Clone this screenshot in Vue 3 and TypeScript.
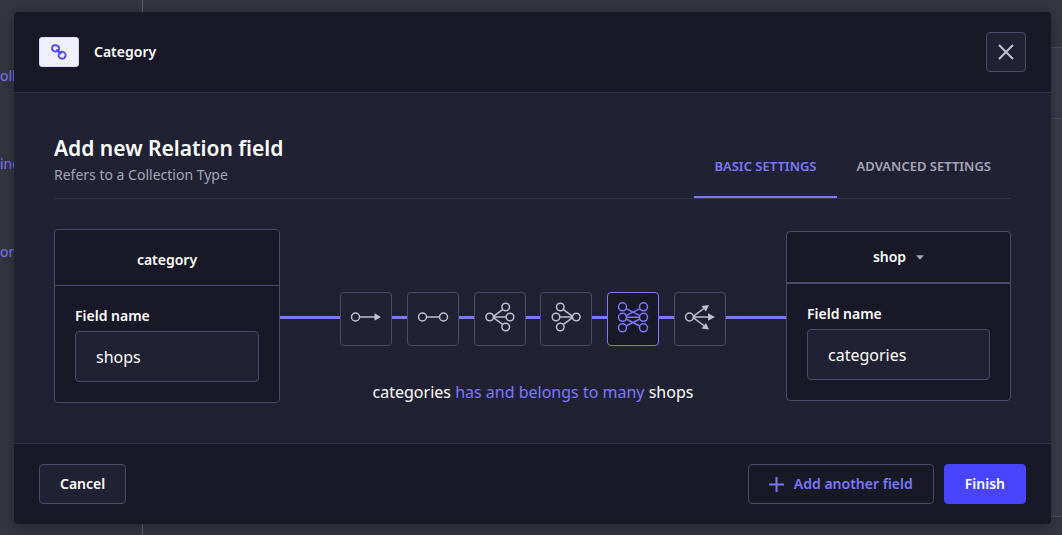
<script setup lang="ts">
import { ref } from 'vue'

interface Relation {
  id: string
  label: string
}

const relations: Relation[] = [
  { id: 'oneWay', label: 'has one' },
  { id: 'oneToOne', label: 'has and belongs to one' },
  { id: 'oneToMany', label: 'belongs to many' },
  { id: 'manyToOne', label: 'has many' },
  { id: 'manyToMany', label: 'has and belongs to many' },
  { id: 'manyWay', label: 'has many (one way)' },
]

const selected = ref('manyToMany')
const sourceField = ref('shops')
const targetField = ref('categories')
const navLinks = ['oll', 'ing', 'om']
</script>

<template>
  <div class="page">
    <nav class="side" aria-label="Content types">
      <a v-for="link in navLinks" :key="link" href="#">{{ link }}</a>
    </nav>
    <div class="content"><div class="panel-head"></div></div>

    <section class="modal" role="dialog" aria-labelledby="crumb">
      <header class="modal-header">
        <span class="type-icon">
          <svg width="16" height="16" viewBox="0 0 16 16" fill="none" stroke="#4945ff" stroke-width="1.8">
            <rect x="1" y="1.2" width="7" height="6.4" rx="3.2" transform="rotate(12 4.5 4.4)" />
            <rect x="7.6" y="7.8" width="7" height="6.8" rx="3.3" transform="rotate(12 11 11.2)" />
            <path d="M5.4 5.4 L10.2 10.2" />
          </svg>
        </span>
        <span id="crumb" class="crumb">Category</span>
        <button class="close" type="button" aria-label="Close">
          <svg width="16" height="16" viewBox="0 0 16 16" stroke="#c0c0cf" stroke-width="2">
            <path d="M1 1 L15 15 M15 1 L1 15" />
          </svg>
        </button>
      </header>

      <div class="modal-body">
        <div class="title-row">
          <div class="titles">
            <h2>Add new Relation field</h2>
            <p>Refers to a Collection Type</p>
          </div>
          <div class="tabs" role="tablist">
            <button class="tab active" type="button" role="tab" aria-selected="true">BASIC SETTINGS</button>
            <button class="tab" type="button" role="tab" aria-selected="false">ADVANCED SETTINGS</button>
          </div>
        </div>

        <div class="relation">
          <div class="card source">
            <div class="card-head">category</div>
            <div class="card-body">
              <label for="source-name">Field name</label>
              <input id="source-name" v-model="sourceField" type="text" />
            </div>
          </div>

          <div class="middle">
            <div class="choices">
              <button
                v-for="r in relations"
                :key="r.id"
                type="button"
                class="choice"
                :class="{ selected: r.id === selected }"
                :aria-label="r.label"
                :aria-pressed="r.id === selected"
                @click="selected = r.id"
              >
                <svg width="32" height="32" viewBox="0 0 32 32" fill="none" stroke="currentColor" stroke-width="1.5">
                  <template v-if="r.id === 'oneWay'">
                    <circle cx="5.5" cy="16" r="4" />
                    <path d="M9.5 16 H26" />
                    <path class="solid" d="M24.5 12.2 L31 16 L24.5 19.8 Z" />
                  </template>
                  <template v-else-if="r.id === 'oneToOne'">
                    <circle cx="5.5" cy="16" r="4" />
                    <circle cx="26.5" cy="16" r="4" />
                    <path d="M9.5 16 H22.5" />
                  </template>
                  <template v-else-if="r.id === 'oneToMany'">
                    <circle cx="5.7" cy="16" r="3.8" />
                    <circle cx="21.7" cy="6" r="3.8" />
                    <circle cx="26" cy="16" r="3.8" />
                    <circle cx="21.7" cy="26" r="3.8" />
                    <path d="M9.6 16 H22 M9.4 15.4 L18.6 8.7 M9.4 16.6 L18.6 23.3" />
                  </template>
                  <template v-else-if="r.id === 'manyToOne'">
                    <circle cx="26.3" cy="16" r="3.8" />
                    <circle cx="10.3" cy="6" r="3.8" />
                    <circle cx="6" cy="16" r="3.8" />
                    <circle cx="10.3" cy="26" r="3.8" />
                    <path d="M22.4 16 H10 M22.6 15.4 L13.4 8.7 M22.6 16.6 L13.4 23.3" />
                  </template>
                  <template v-else-if="r.id === 'manyToMany'">
                    <circle cx="5.5" cy="5.8" r="4" />
                    <circle cx="5.5" cy="16.3" r="4" />
                    <circle cx="5.5" cy="26.8" r="4" />
                    <circle cx="26.5" cy="5.8" r="4" />
                    <circle cx="26.5" cy="16.3" r="4" />
                    <circle cx="26.5" cy="26.8" r="4" />
                    <path d="M9.5 16.3 H22.5 M9 7.6 L23 14.6 M23 7.6 L9 14.6 M9 18 L23 25 M23 18 L9 25" />
                  </template>
                  <template v-else>
                    <circle cx="5.5" cy="16" r="3.9" />
                    <path d="M9.4 16 H25 M9.2 15.4 L20.5 7 M9.2 16.6 L20.5 25" />
                    <path class="solid" d="M24 12.2 L31 16 L24 19.8 Z" />
                    <path class="solid" d="M17.5 5 L25 4 L22 10.6 Z" />
                    <path class="solid" d="M17.5 27.6 L25 28.6 L22 22 Z" />
                  </template>
                </svg>
              </button>
            </div>
            <p class="sentence">categories <span>has and belongs to many</span> shops</p>
          </div>

          <div class="card target">
            <button class="card-head" type="button" aria-haspopup="menu">
              shop
              <svg width="8" height="5" viewBox="0 0 8 5"><path d="M0 0.3 H8 L4 4.8 Z" fill="#a5a5ba" /></svg>
            </button>
            <div class="card-body">
              <label for="target-name">Field name</label>
              <input id="target-name" v-model="targetField" type="text" />
            </div>
          </div>
        </div>
      </div>

      <footer class="modal-footer">
        <button class="btn" type="button">Cancel</button>
        <button class="btn add" type="button">
          <svg width="15" height="15" viewBox="0 0 15 15" stroke="#7b79ff" stroke-width="2">
            <path d="M7.5 0 V15 M0 7.5 H15" />
          </svg>
          Add another field
        </button>
        <button class="btn primary" type="button">Finish</button>
      </footer>
    </section>
  </div>
</template>

<style>
body {
  background: #363640;
}
</style>

<style scoped>
.page {
  position: relative;
  display: flex;
  min-height: 100vh;
  padding: 12px 11px 11px 14px;
  box-sizing: border-box;
  overflow: hidden;
  align-items: flex-start;
  font-family: "Noto Sans", "Open Sans", sans-serif;
  font-size: 14px;
  line-height: 20px;
  color: #fff;
}
button,
input {
  font: inherit;
  color: inherit;
  margin: 0;
  box-sizing: border-box;
}
button {
  cursor: pointer;
}
svg {
  display: block;
  flex: none;
}
.side {
  position: absolute;
  inset: 0 auto 0 0;
  width: 142px;
  padding-top: 66px;
  border-right: 1px solid #5f5e77;
}
.side a {
  display: block;
  margin-bottom: 68px;
  color: #7b79ff;
  text-decoration: none;
}
.content {
  position: absolute;
  inset: 47px 0 18px 200px;
  border: 1px solid #4c4b60;
  border-right: 0;
  background: #3c3b49;
}
.panel-head {
  height: 70px;
  border-bottom: 1px solid #4c4b60;
}
.modal {
  position: relative;
  flex: 1;
  min-width: 0;
  border-radius: 4px;
  background: #212134;
  box-shadow: 0 2px 15px rgba(3, 3, 5, 0.35);
}
.modal-header,
.modal-footer {
  display: flex;
  align-items: center;
  padding: 20px 25px;
  background: #181826;
}
.modal-header {
  border-bottom: 1px solid #32324d;
  border-radius: 4px 4px 0 0;
}
.modal-footer {
  gap: 10px;
  border-top: 1px solid #32324d;
  border-radius: 0 0 4px 4px;
}
.type-icon {
  display: flex;
  align-items: center;
  justify-content: center;
  width: 40px;
  height: 30px;
  box-sizing: border-box;
  border: 1px solid #d9d8ff;
  border-radius: 3px;
  background: #f0f0ff;
}
.crumb {
  margin-left: 15px;
  font-weight: 600;
}
.close {
  display: flex;
  align-items: center;
  justify-content: center;
  width: 40px;
  height: 40px;
  margin-left: auto;
  padding: 0;
  border: 1px solid #4a4a6a;
  border-radius: 4px;
  background: #212134;
}
.modal-body {
  padding: 40px;
}
.title-row {
  display: flex;
  justify-content: space-between;
  align-items: flex-end;
  border-bottom: 1px solid #32324d;
}
.titles {
  padding-bottom: 12px;
}
h2 {
  margin: 0;
  font-size: 21px;
  line-height: 30px;
  font-weight: 600;
}
p {
  margin: 0;
}
.titles p {
  line-height: 23px;
  color: #a5a5ba;
}
.tabs {
  display: flex;
}
.tab {
  padding: 20px;
  border: 0;
  border-bottom: 2px solid transparent;
  background: none;
  font-size: 13px;
  font-weight: 600;
  color: #a5a5ba;
}
.tab.active {
  border-color: #7b79ff;
  color: #7b79ff;
}
.relation {
  display: flex;
  align-items: center;
  margin-top: 30px;
}
.card {
  flex: none;
  box-sizing: border-box;
  border: 1px solid #4a4a6a;
  border-radius: 4px;
  background: #181826;
}
.card.source {
  width: 226px;
}
.card.target {
  width: 225px;
}
.card-head {
  padding: 20px 0 15px;
  border-bottom: 1px solid #4a4a6a;
  text-align: center;
  font-weight: 600;
}
.target .card-head {
  display: flex;
  align-items: center;
  justify-content: center;
  gap: 10px;
  width: 100%;
  padding: 15px 0;
  border: 0;
  border-bottom: 2px solid #4a4a6a;
  background: none;
}
.card-body {
  padding: 20px;
}
.card-body label {
  display: block;
  margin-bottom: 5px;
  font-weight: 600;
}
.card-body input {
  display: block;
  width: 100%;
  height: 51px;
  padding: 0 20px;
  border: 1px solid #4a4a6a;
  border-radius: 4px;
  background: #212134;
  font-size: 16px;
  outline: none;
}
.middle {
  flex: 1;
  align-self: flex-start;
  padding-top: 63px;
}
.choices {
  display: flex;
  justify-content: space-between;
  padding: 0 60px;
  background: linear-gradient(#7b79ff, #7b79ff) 0 24px / 100% 3px no-repeat;
}
.choice {
  display: flex;
  align-items: center;
  justify-content: center;
  width: 52px;
  height: 54px;
  padding: 0 0 4px;
  border: 1px solid #4a4a6a;
  border-radius: 4px;
  background: #212134;
  color: #c0c0cf;
}
.choice.selected {
  border-color: #7b79ff;
  background: #181826;
  color: #7b79ff;
}
.solid {
  fill: currentColor;
  stroke: none;
}
.sentence {
  margin-top: 36px;
  text-align: center;
  font-size: 16px;
}
.sentence span {
  color: #7b79ff;
}
.btn {
  display: flex;
  align-items: center;
  gap: 10px;
  height: 40px;
  padding: 0 20px;
  border: 1px solid #4a4a6a;
  border-radius: 4px;
  background: #212134;
  font-weight: 600;
}
.btn.add {
  margin-left: auto;
  background: #181826;
  color: #7b79ff;
}
.btn.primary {
  border-color: #4945ff;
  background: #4945ff;
}
</style>
